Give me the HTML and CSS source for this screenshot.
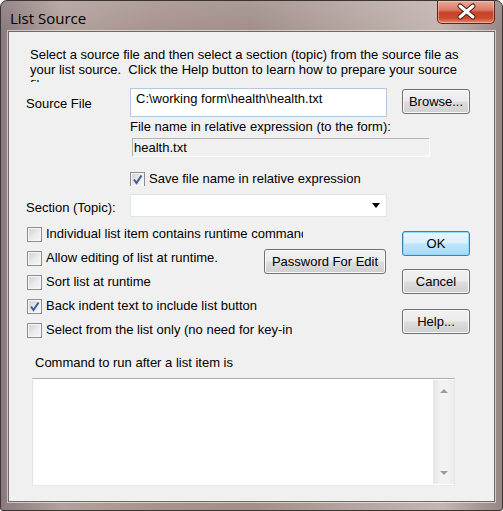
FILE: index.html
```html
<!DOCTYPE html>
<html lang="en">
<head>
    <meta charset="UTF-8">
    <title>List Source</title>
    <link rel="stylesheet" href="styles.css">
</head>
<body>
    <div class="window">
        <div class="titlebar">
            <span class="title">List Source</span>
            <button class="close-btn" aria-label="Close">
                <svg width="58" height="23" viewBox="0 0 58 23">
                    <path d="M23 6 L36 17 M36 6 L23 17" stroke="#4a1a12" stroke-width="5" stroke-linecap="round"/>
                    <path d="M23 6 L36 17 M36 6 L23 17" stroke="#ffffff" stroke-width="3" stroke-linecap="round"/>
                </svg>
            </button>
        </div>

        <div class="client">
            <p class="intro">Select a source file and then select a section (topic) from the source file as<br>your list source.&nbsp; Click the Help button to learn how to prepare your source<br>file.</p>

            <div class="file-grid">
                <span class="field-label">Source File</span>
                <div class="edit path-edit">C:\working form\health\health.txt</div>
                <button class="btn browse-btn">Browse...</button>

                <span class="rel-label">File name in relative expression (to the form):</span>
                <div class="readonly">health.txt</div>

                <label class="check save-check">
                    <span class="box"><svg width="13" height="13" viewBox="0 0 13 13"><path d="M3 6.5 L5.5 10 L10.5 2.5" fill="none" stroke="#3e5b9a" stroke-width="2"/></svg></span>
                    Save file name in relative expression
                </label>

                <span class="field-label section-label">Section (Topic):</span>
                <div class="combo"><span class="combo-arrow"></span></div>
            </div>

            <div class="options">
                <div class="check-list">
                    <label class="check row-wide"><span class="box"></span>Individual list item contains runtime commands</label>
                    <label class="check"><span class="box"></span>Allow editing of list at runtime.</label>
                    <label class="check"><span class="box"></span>Sort list at runtime</label>
                    <label class="check">
                        <span class="box"><svg width="13" height="13" viewBox="0 0 13 13"><path d="M3 6.5 L5.5 10 L10.5 2.5" fill="none" stroke="#3e5b9a" stroke-width="2"/></svg></span>Back indent text to include list button
                    </label>
                    <label class="check row-short"><span class="box"></span>Select from the list only (no need for key-in)</label>
                </div>

                <div class="mid-col">
                    <button class="btn password-btn">Password For Edit</button>
                </div>

                <div class="side-buttons">
                    <button class="btn btn-default ok-btn">OK</button>
                    <button class="btn cancel-btn">Cancel</button>
                    <button class="btn help-btn">Help...</button>
                </div>
            </div>

            <div class="cmd-label">Command to run after a list item is</div>
            <div class="memo">
                <div class="memo-text"></div>
                <div class="vscroll">
                    <span class="arrow-up"></span>
                    <span class="arrow-down"></span>
                </div>
            </div>
        </div>
    </div>
</body>
</html>
```

FILE: styles.css
```css
body {
    margin: 0;
    padding: 0;
    background: #ffffff;
    font-family: "Liberation Sans", Arial, sans-serif;
    font-size: 13px;
    color: #000;
}

.window {
    box-sizing: border-box;
    width: 503px;
    height: 511px;
    border: 1px solid #3a3432;
    border-radius: 7px 7px 3px 3px;
    padding: 0 7px 8px 7px;
    background:
        linear-gradient(180deg, rgba(255, 255, 255, 0.1), rgba(255, 255, 255, 0) 30px),
        linear-gradient(90deg, #8a7a7e 0%, #b2a19c 12%, #a8948e 30%, #a28f89 50%, #b5a49f 70%, #c3b6b1 88%, #968685 100%);
}

.titlebar {
    display: flex;
    align-items: flex-start;
    height: 30px;
}

.title {
    font-family: "Open Sans", "Noto Sans", sans-serif;
    font-size: 15px;
    line-height: 20px;
    padding: 7px 0 0 2px;
    color: #000;
}

.close-btn {
    margin-left: auto;
    width: 58px;
    height: 23px;
    padding: 0;
    border: 1px solid #5e2419;
    border-top: none;
    border-radius: 0 0 5px 5px;
    background: linear-gradient(180deg, #e9a897 0%, #d97c66 40%, #c7442a 52%, #cc4a2f 78%, #e48b6c 100%);
    box-shadow: inset 0 0 0 1px rgba(255, 220, 210, 0.45);
}

.close-btn svg {
    display: block;
    margin: -1px 0 0 -1px;
}

.client {
    box-sizing: border-box;
    height: 471px;
    background: #f0f0f0;
    border: 1px solid #6e6866;
    box-shadow: 0 0 0 1px rgba(255, 255, 255, 0.55);
    padding-left: 17px;
    line-height: 15px;
}

.intro {
    margin: 15px 0 0 4px;
    height: 35px;
    overflow: hidden;
    white-space: nowrap;
}

/* source file block */
.file-grid {
    display: grid;
    grid-template-columns: 104px 257px 15px 68px;
    margin-top: 6px;
}

.field-label {
    grid-column: 1;
    margin-top: 8px;
}

.edit {
    box-sizing: border-box;
    background: #fff;
}

.path-edit {
    grid-column: 2;
    height: 29px;
    border: 1px solid #b3c9df;
    padding: 2px 5px;
}

.browse-btn {
    grid-column: 4;
    margin-top: 1px;
}

.rel-label {
    grid-column: 2 / span 3;
    margin-top: 2px;
}

.readonly {
    grid-column: 2 / span 3;
    box-sizing: border-box;
    width: 298px;
    height: 19px;
    margin: 4px 0 0 2px;
    padding: 1px;
    border: 1px solid;
    border-color: #b4b4b4 #ffffff #ffffff #b4b4b4;
}

.save-check {
    grid-column: 2 / span 3;
    margin-top: 14px;
}

.section-label {
    margin-top: 14px;
}

.combo {
    grid-column: 2;
    position: relative;
    box-sizing: border-box;
    height: 23px;
    margin-top: 8px;
    background: #fff;
    border: 1px solid #dfe5ec;
}

.combo-arrow {
    position: absolute;
    right: 6px;
    top: 8px;
    border-left: 4px solid transparent;
    border-right: 4px solid transparent;
    border-top: 5px solid #000;
}

/* checkboxes */
.check {
    display: flex;
    align-items: flex-start;
    white-space: nowrap;
    overflow: hidden;
    height: 15px;
}

.box {
    box-sizing: border-box;
    flex: none;
    width: 15px;
    height: 15px;
    margin: 1px 4px 0 0;
    border: 1px solid #8e8f8f;
    background: linear-gradient(135deg, #cfcfcf 0%, #e9e9e9 50%, #fbfbfb 100%);
    box-shadow: inset 0 0 0 1px #f6f6f6;
}

.box svg {
    display: block;
}

.options {
    display: flex;
    margin-top: 9px;
}

.check-list {
    width: 238px;
}

.check-list .check {
    width: 238px;
    height: 24px;
    padding-left: 1px;
    overflow: visible;
}

.check-list .row-wide,
.check-list .row-short {
    overflow: hidden;
}

.check-list .row-wide {
    width: 276px;
}

.check-list .row-short {
    width: 265px;
}

.mid-col {
    width: 122px;
    padding-top: 23px;
}

.side-buttons {
    display: flex;
    flex-direction: column;
    width: 68px;
    margin-left: 16px;
}

/* buttons */
.btn {
    box-sizing: border-box;
    height: 25px;
    padding: 0;
    font-family: "Liberation Sans", Arial, sans-serif;
    font-size: 13px;
    color: #000;
    border: 1px solid #707070;
    border-radius: 3px;
    background: linear-gradient(180deg, #f2f2f2 0%, #ebebeb 48%, #dddddd 52%, #cfcfcf 100%);
    box-shadow: inset 0 0 0 1px #fbfbfb;
}

.btn-default {
    border-color: #3c7fb1;
    background: linear-gradient(180deg, #eaf6fd 0%, #d9f0fc 48%, #bee6fd 52%, #a7d9f5 100%);
    box-shadow: inset 0 0 0 1px #8fdcf8;
}

.password-btn {
    width: 122px;
}

.ok-btn {
    margin-top: 5px;
}

.cancel-btn {
    margin-top: 13px;
}

.help-btn {
    margin-top: 15px;
}

/* command box */
.cmd-label {
    margin: 9px 0 0 9px;
}

.memo {
    display: flex;
    box-sizing: border-box;
    width: 423px;
    height: 108px;
    margin: 8px 0 0 6px;
    background: #fff;
    border: 1px solid;
    border-color: #abadb3 #e3e9ef #e3e9ef #e2e3ea;
}

.memo-text {
    flex: 1;
}

.vscroll {
    position: relative;
    width: 20px;
    margin: 1px 0;
    background: linear-gradient(90deg, #e6e6e6, #f2f2f2 30%, #f2f2f2 70%, #ebebeb);
    border-left: 1px solid #e8e8e8;
}

.arrow-up,
.arrow-down {
    position: absolute;
    left: 6px;
    border-left: 4px solid transparent;
    border-right: 4px solid transparent;
}

.arrow-up {
    top: 9px;
    border-bottom: 4px solid #9c9c9c;
}

.arrow-down {
    bottom: 9px;
    border-top: 4px solid #9c9c9c;
}
```
